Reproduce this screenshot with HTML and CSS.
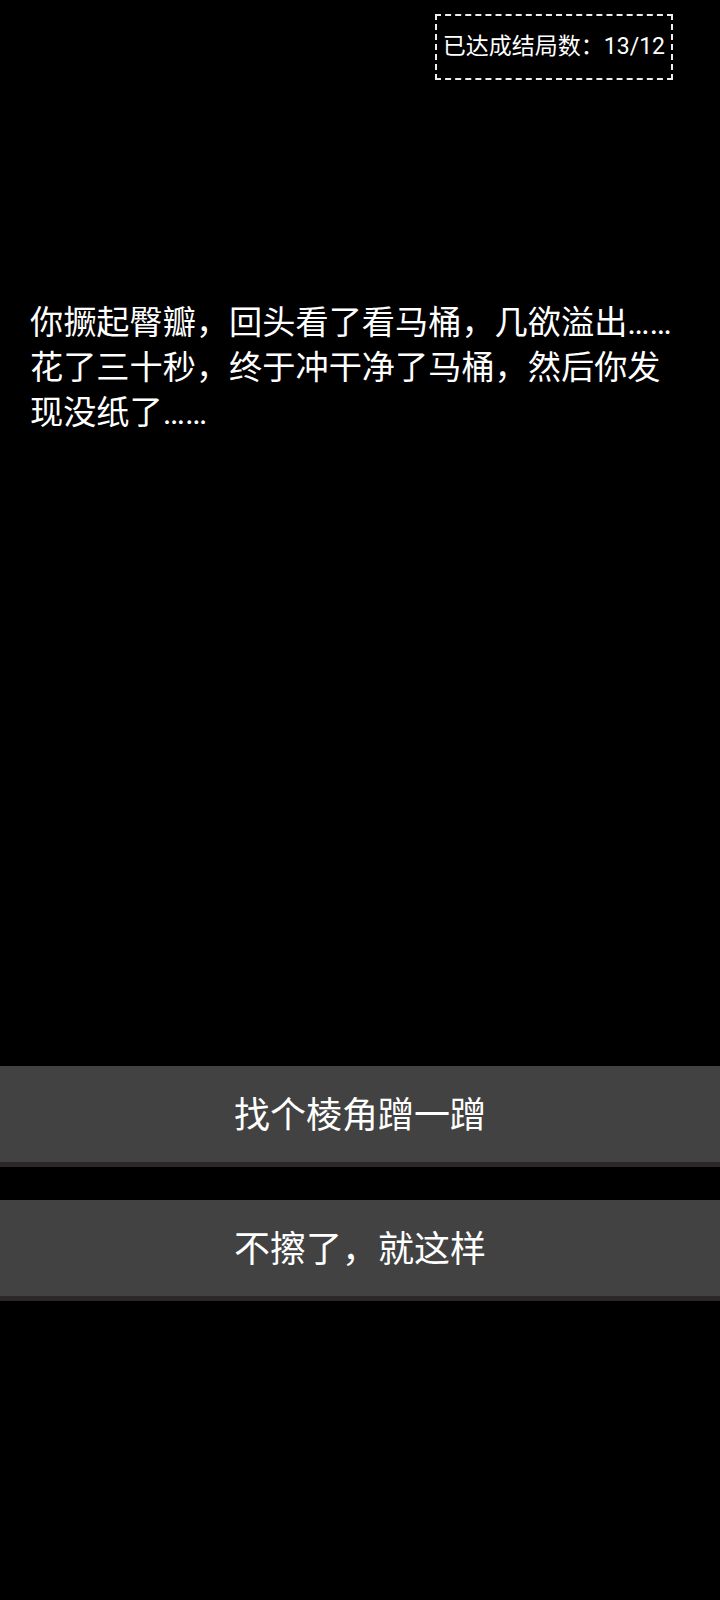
FILE: index.html
```html
<!DOCTYPE html>
<html lang="zh-CN">
<head>
    <meta charset="UTF-8">
    <meta name="viewport" content="width=device-width, initial-scale=1.0">
    <title>结局</title>
    <link rel="stylesheet" href="styles.css">
</head>
<body>
    <div class="top">
        <div class="badge">已达成结局数：13/12</div>
    </div>
    <div class="story">
        <p class="text">你撅起臀瓣，回头看了看马桶，几欲溢出……花了三十秒，终于冲干净了马桶，然后你发现没纸了……</p>
    </div>
    <div class="choices">
        <div class="choice">找个棱角蹭一蹭</div>
        <div class="choice">不擦了，就这样</div>
    </div>
</body>
</html>
```

FILE: styles.css
```css
*{
    margin: 0;
    padding: 0;
    box-sizing: border-box;
    font-family: Roboto, "Noto Sans CJK SC", sans-serif;
}
body{
    background-color: #000;
    color: #fff;
    width: 720px;
    min-height: 1600px;
}
.top{
    display: flex;
    justify-content: flex-end;
    padding: 14px 47px 0 0;
}
.badge{
    border: 2px dashed #eee;
    padding: 0 6px;
    height: 66px;
    line-height: 62px;
    font-size: 23px;
    white-space: nowrap;
}
.story{
    height: 986px;
    padding: 220px 36px 0 30px;
}
.text{
    font-size: 33.2px;
    line-height: 45px;
}
.choices{
    display: flex;
    flex-direction: column;
    gap: 33px;
}
.choice{
    height: 101px;
    background-color: #424242;
    border-bottom: 5px solid #2b2728;
    display: flex;
    justify-content: center;
    align-items: center;
    font-size: 36px;
    padding-bottom: 5px;
}
```
